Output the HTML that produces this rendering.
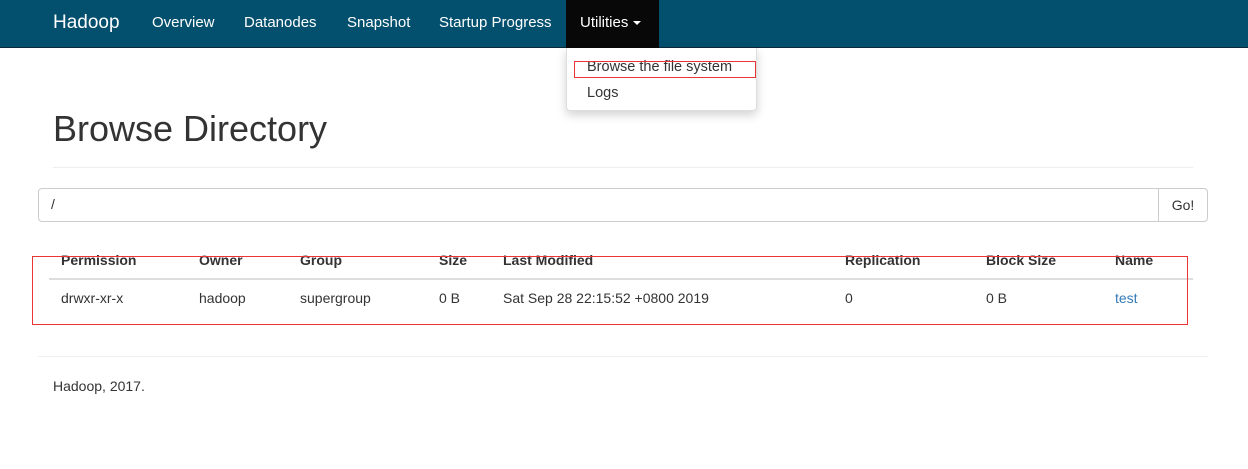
<!DOCTYPE html>
<html><head><meta charset="utf-8"><style>
*{box-sizing:border-box;margin:0;padding:0}
body{width:1248px;height:469px;background:#fff;font-family:"Liberation Sans",sans-serif;font-size:14px;color:#333;position:relative;overflow:hidden}
.nav{position:absolute;left:0;top:0;width:1248px;height:48px;background:#024f6e;border-bottom:1px solid #0b2a38}
.nav span{position:absolute;top:0;line-height:46px;color:#fff;font-size:15px}
.util{position:absolute;left:566px;top:0;width:93px;height:48px;background:#080808}
.dd{position:absolute;left:566px;top:48px;width:191px;height:63px;background:#fff;border:1px solid #ddd;border-top:none;border-radius:0 0 4px 4px;box-shadow:0 4px 10px rgba(0,0,0,.18)}
.abs{position:absolute;white-space:nowrap}
.red{position:absolute;border:1px solid #e33}
.th{font-weight:bold;top:252px}
.td{top:290px}
</style></head><body>
<div class="nav">
<span style="left:53px;font-size:19px">Hadoop</span>
<span style="left:152px">Overview</span>
<span style="left:244px">Datanodes</span>
<span style="left:347px">Snapshot</span>
<span style="left:439px">Startup Progress</span>
</div>
<div class="util"></div>
<span class="abs" style="left:580px;top:0;line-height:46px;color:#fff;font-size:15px">Utilities <span style="display:inline-block;width:0;height:0;border-left:4px solid transparent;border-right:4px solid transparent;border-top:4px solid #fff;vertical-align:middle"></span></span>
<div class="dd"></div>
<span class="abs" style="left:587px;top:59px;font-size:14.5px">Browse the file system</span>
<span class="abs" style="left:587px;top:85px;font-size:14.5px">Logs</span>
<div class="red" style="left:574px;top:61px;width:182px;height:17px"></div>
<div class="abs" style="left:53px;top:108px;font-size:36px;color:#333">Browse Directory</div>
<div class="abs" style="left:53px;top:167px;width:1140px;border-top:1px solid #eee"></div>
<div class="abs" style="left:38px;top:188px;width:1121px;height:34px;border:1px solid #ccc;border-radius:4px 0 0 4px"></div>
<span class="abs" style="left:51px;top:196px">/</span>
<div class="abs" style="left:1158px;top:188px;width:50px;height:34px;border:1px solid #ccc;border-radius:0 4px 4px 0;text-align:center;line-height:32px">Go!</div>
<span class="abs th" style="left:61px">Permission</span>
<span class="abs th" style="left:199px">Owner</span>
<span class="abs th" style="left:300px">Group</span>
<span class="abs th" style="left:439px">Size</span>
<span class="abs th" style="left:503px">Last Modified</span>
<span class="abs th" style="left:845px">Replication</span>
<span class="abs th" style="left:986px">Block Size</span>
<span class="abs th" style="left:1115px">Name</span>
<div class="abs" style="left:49px;top:278px;width:1144px;border-top:2px solid #ddd"></div>
<span class="abs td" style="left:61px">drwxr-xr-x</span>
<span class="abs td" style="left:199px">hadoop</span>
<span class="abs td" style="left:300px">supergroup</span>
<span class="abs td" style="left:439px">0 B</span>
<span class="abs td" style="left:503px">Sat Sep 28 22:15:52 +0800 2019</span>
<span class="abs td" style="left:845px">0</span>
<span class="abs td" style="left:986px">0 B</span>
<span class="abs td" style="left:1115px;color:#337ab7">test</span>
<div class="red" style="left:32px;top:256px;width:1156px;height:69px"></div>
<div class="abs" style="left:38px;top:356px;width:1170px;border-top:1px solid #eee"></div>
<span class="abs" style="left:53px;top:378px">Hadoop, 2017.</span>
</body></html>
